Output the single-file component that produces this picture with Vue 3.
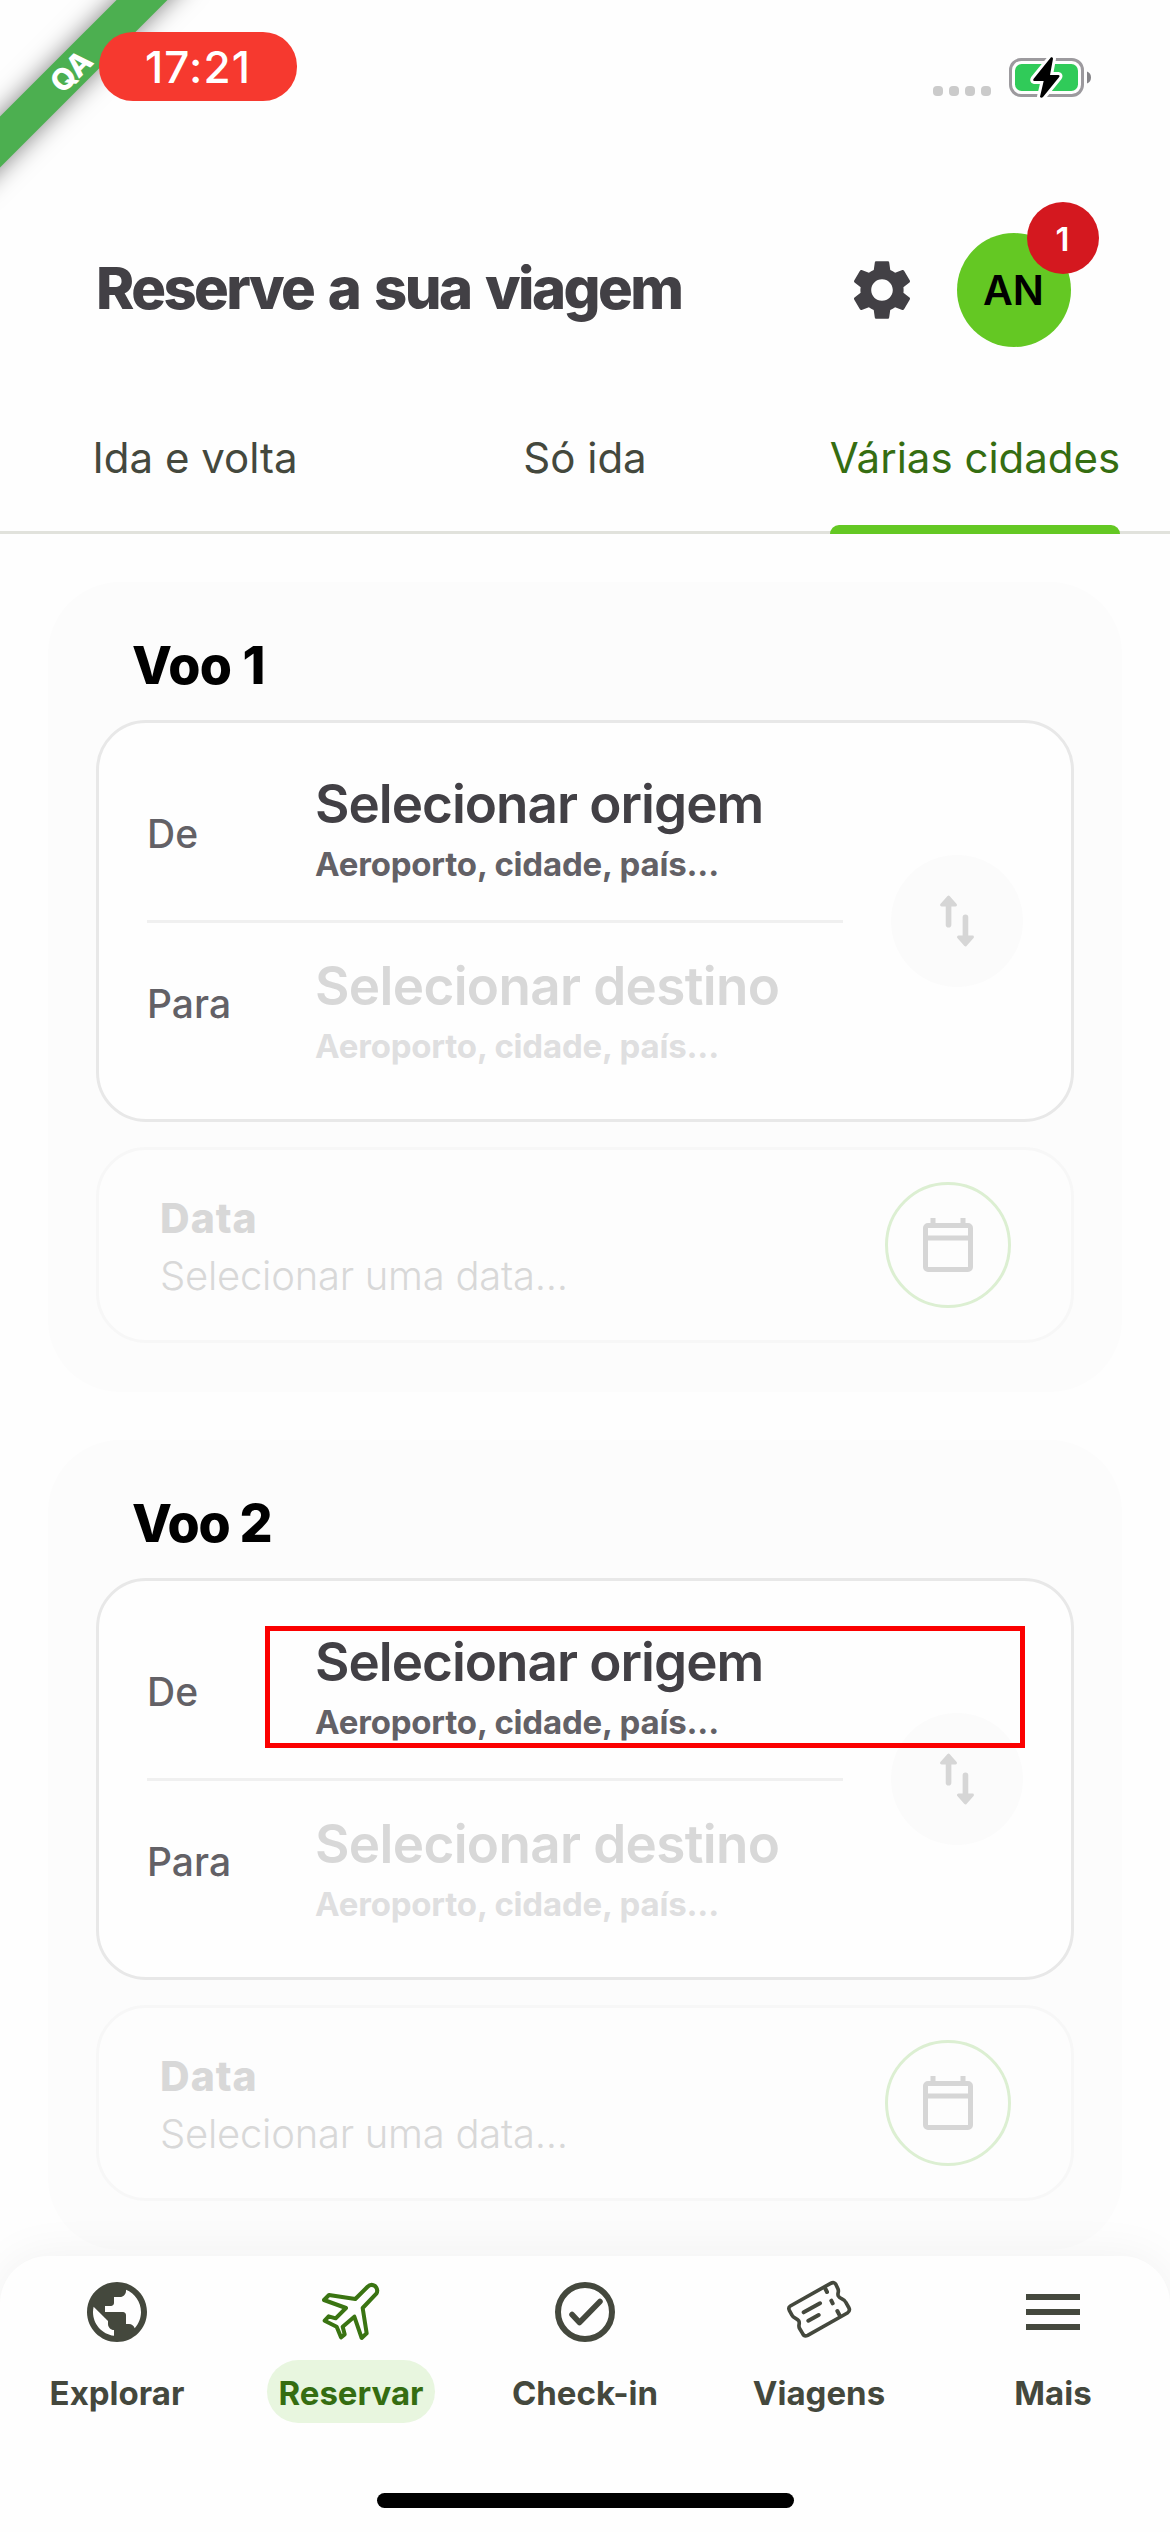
<script setup>
const tabs = [
  { label: 'Ida e volta', active: false },
  { label: 'Só ida', active: false },
  { label: 'Várias cidades', active: true }
]

const flights = [
  { id: 1, title: 'Voo 1', highlighted: false },
  { id: 2, title: 'Voo 2', highlighted: true }
]

const navItems = [
  { id: 'explore', label: 'Explorar' },
  { id: 'book', label: 'Reservar', active: true },
  { id: 'checkin', label: 'Check-in' },
  { id: 'trips', label: 'Viagens' },
  { id: 'more', label: 'Mais' }
]
</script>

<template>
  <div class="screen">
    <div class="ribbon">QA</div>

    <div class="status">
      <div class="clock">17:21</div>
      <div class="signal"><i v-for="n in 4" :key="n"></i></div>
      <svg class="battery" viewBox="459 156 270 150">
        <rect x="481.500" y="178.500" width="216" height="108" rx="32" fill="none" stroke="#9c9a9e" stroke-width="9" />
        <rect x="495" y="192" width="189" height="81" rx="20" fill="#30cb59" />
        <path d="M711 214.500q12 5 12 18t-12 18z" fill="#858488" />
        <path d="M603 172q6-2 6 4l-9 49h25q6 1 2 7l-48 59q-6 5-9-1l11-47h-28q-6-1-2-7z" fill="#000" stroke="#fff" stroke-width="18" stroke-linejoin="round" paint-order="stroke" />
      </svg>
    </div>

    <header class="header">
      <h1>Reserve a sua viagem</h1>
      <svg class="gear" viewBox="0 0 24 24" fill="#424045">
        <path d="M19.140 12.940c.04-.3.06-.61.06-.94 0-.32-.02-.64-.07-.94l2.030-1.580c.18-.14.23-.41.12-.61l-1.920-3.320c-.12-.22-.37-.29-.59-.22l-2.390.96c-.5-.38-1.030-.7-1.620-.94l-.36-2.540c-.04-.24-.24-.41-.48-.41h-3.840c-.24 0-.43.17-.47.41l-.36 2.540c-.59.24-1.130.57-1.620.94l-2.390-.96c-.22-.08-.47 0-.59.22L2.740 8.870c-.12.21-.08.47.12.61l2.030 1.580c-.05.3-.09.63-.09.94s.02.64.07.94l-2.030 1.580c-.18.14-.23.41-.12.61l1.920 3.320c.12.22.37.29.59.22l2.390-.96c.5.38 1.030.7 1.620.94l.36 2.540c.05.24.24.41.48.41h3.840c.24 0 .44-.17.47-.41l.36-2.540c.59-.24 1.130-.56 1.620-.94l2.390.96c.22.08.47 0 .59-.22l1.920-3.320c.12-.22.07-.47-.12-.61l-2.010-1.580zM12 15.600c-1.980 0-3.600-1.620-3.600-3.600s1.620-3.600 3.600-3.600 3.600 1.620 3.600 3.600-1.620 3.600-3.600 3.600z" />
      </svg>
      <div class="avatar">AN<span class="badge">1</span></div>
    </header>

    <nav class="tabs">
      <div v-for="tab in tabs" :key="tab.label" class="tab">
        <span :class="{ active: tab.active }">{{ tab.label }}</span>
      </div>
    </nav>

    <main class="list">
      <section v-for="flight in flights" :key="flight.id" class="flight">
        <h2 :class="{ wide: flight.id === 1 }">{{ flight.title }}</h2>

        <div class="route">
          <div class="places">
            <div class="place origin">
              <span class="label">De</span>
              <div class="choice">
                <strong>Selecionar origem</strong>
                <small>Aeroporto, cidade, país...</small>
              </div>
            </div>
            <div class="divider"></div>
            <div class="place destination">
              <span class="label">Para</span>
              <div class="choice">
                <strong>Selecionar destino</strong>
                <small>Aeroporto, cidade, país...</small>
              </div>
            </div>
          </div>
          <div class="swap">
            <svg viewBox="0 0 60 60" fill="#d6d6d6" stroke="#d6d6d6" stroke-linecap="round" stroke-linejoin="round">
              <path d="M21 12v22M39 26v22" fill="none" stroke-width="6" />
              <path d="M21 4.500L13.500 13h15zM39 55.500L31.500 47h15z" stroke-width="3" />
            </svg>
          </div>
          <div v-if="flight.highlighted" class="marker"></div>
        </div>

        <div class="date">
          <div class="date-text">
            <strong>Data</strong>
            <span>Selecionar uma data...</span>
          </div>
          <div class="calendar">
            <svg viewBox="0 0 60 60" fill="none" stroke="#d6d6d6" stroke-width="5">
              <rect x="7.500" y="10.500" width="45" height="44" rx="2.500" />
              <path d="M7.500 23h45M15 3v7M45 3v7" />
            </svg>
          </div>
        </div>
      </section>
    </main>

    <footer class="bottom">
      <div class="items">
        <div v-for="item in navItems" :key="item.id" class="item" :class="{ current: item.active }">
          <svg v-if="item.id === 'explore'" viewBox="-4.667 -3 33.333 30" fill="#44483d">
            <path d="M12 2C6.480 2 2 6.480 2 12s4.480 10 10 10 10-4.480 10-10S17.520 2 12 2zm-1 17.930c-3.950-.49-7-3.850-7-7.930 0-.62.08-1.210.21-1.790L9 15v1c0 1.100.9 2 2 2v1.930zm6.900-2.540c-.26-.81-1-1.390-1.900-1.390h-1v-3c0-.55-.45-1-1-1H8v-2h2c.55 0 1-.45 1-1V7h2c1.100 0 2-.9 2-2v-.41c2.930 1.190 5 4.060 5 7.410 0 2.080-.8 3.970-2.100 5.390z" />
          </svg>
          <svg v-else-if="item.id === 'book'" viewBox="903 141 300 270" fill="none" stroke="#3a7412" stroke-width="12" stroke-linejoin="round">
            <path d="M1066 237L1102 201Q1113 190 1125 198Q1136 209 1129 221L1088 264L1100 340L1085 354L1063 290L1028 320L1034 343L1023 352L1010 320L974 302L986 289L1007 295L1038 264L972 240L987 225Z" />
          </svg>
          <svg v-else-if="item.id === 'checkin'" viewBox="-50 -45 100 90" fill="none" stroke="#44483d">
            <circle r="27" stroke-width="6" />
            <path d="M-13 2.500L-5.500 10.500L15 -10.500" stroke-width="5.500" stroke-linecap="round" stroke-linejoin="round" />
          </svg>
          <svg v-else-if="item.id === 'trips'" viewBox="-3 -9 300 270" fill="none" stroke="#44483d" stroke-width="11" stroke-linecap="round" stroke-linejoin="round">
            <path d="M61 108L182 40Q193 34 198 44L204 57C208 68 201 69 205 78C210 88 224 86 228 98L237 114Q241 123 232 129L113 196Q103 201 98 191L88 174C84 164 91 161 86 152C81 144 70 145 65 134L58 121Q54 112 61 108Z" />
            <path d="M165 54L171 66M184 92L188 100M202 123L209 136M101 127L150 100M115 152L146 135" stroke-width="12" />
          </svg>
          <svg v-else viewBox="0 0 100 90" fill="#44483d">
            <path d="M23 27h54v6H23zM23 42h54v6H23zM23 57h54v6H23z" />
          </svg>
          <span>{{ item.label }}</span>
        </div>
      </div>
      <div class="home"></div>
    </footer>
  </div>
</template>

<style>
body {
  background: #fff;
}
</style>

<style scoped>
* {
  box-sizing: border-box;
}

.screen {
  position: relative;
  display: flex;
  flex-direction: column;
  width: 1170px;
  height: 2532px;
  overflow: hidden;
  background: #fefefe;
  font-family: Inter, "Liberation Sans", sans-serif;
  color: #424045;
}

.ribbon {
  position: absolute;
  left: -79px;
  top: 53px;
  width: 300px;
  height: 36px;
  background: #4caf50;
  box-shadow: 0 0 24px rgba(0, 0, 0, 0.5);
  transform: rotate(-45deg);
  color: #fff;
  font-size: 30px;
  font-weight: 800;
  line-height: 37px;
  text-align: center;
}

.status {
  position: relative;
  display: flex;
  align-items: flex-start;
  height: 141px;
  padding-right: 77px;
}

.clock {
  width: 198px;
  height: 69px;
  margin: 32px auto 0 99px;
  border-radius: 34px;
  background: #f6392f;
  color: #fff;
  font-size: 44px;
  font-weight: 500;
  letter-spacing: 1.100px;
  line-height: 70px;
  text-align: center;
}

.signal {
  display: flex;
  gap: 6px;
  margin: 86px 12px 0 0;
}

.signal i {
  width: 10px;
  height: 10px;
  border-radius: 4px;
  background: #cbcbcb;
}

.battery {
  width: 90px;
  height: 50px;
  margin-top: 52px;
}

.header {
  display: flex;
  align-items: center;
  height: 240px;
  padding: 57px 99.500px 0 96px;
}

h1 {
  flex: 1;
  margin: 0 0 4px;
  font-size: 58px;
  font-weight: 800;
  letter-spacing: -2.600px;
  word-spacing: 4.500px;
  line-height: 70px;
}

.gear {
  width: 72px;
  height: 72px;
  margin-right: 38.500px;
}

.avatar {
  position: relative;
  width: 114px;
  height: 114px;
  border-radius: 50%;
  background: #64c823;
  color: #000;
  font-size: 41px;
  font-weight: 600;
  line-height: 114px;
  text-align: center;
}

.badge {
  position: absolute;
  left: 70px;
  top: -31px;
  width: 72px;
  height: 72px;
  border-radius: 50%;
  background: #d4181f;
  color: #fff;
  font-size: 33px;
  line-height: 75px;
}

.tabs {
  display: flex;
  height: 153px;
  border-bottom: 3px solid #e1e2dc;
}

.tab {
  flex: 1;
  display: flex;
  justify-content: center;
  height: 153px;
  font-size: 42px;
  line-height: 153px;
  color: #44483d;
}

.tab span {
  display: block;
  height: 153px;
}

.tab .active {
  position: relative;
  color: #356d11;
}

.tab .active::after {
  content: '';
  position: absolute;
  left: 0;
  right: 0;
  bottom: 0;
  height: 9px;
  border-radius: 9px 9px 0 0;
  background: #64c823;
}

.list {
  display: flex;
  flex-direction: column;
  gap: 48px;
  padding: 48px;
}

.flight {
  flex: none;
  height: 810px;
  padding: 0 48px;
  border-radius: 72px;
  background: #fcfcfc;
}

h2 {
  height: 138px;
  margin: 0;
  padding: 29px 0 0 36px;
  color: #000;
  font-size: 52px;
  font-weight: 800;
  letter-spacing: -1.200px;
  line-height: 110px;
}

h2.wide {
  letter-spacing: -0.500px;
}

.route {
  position: relative;
  display: flex;
  align-items: center;
  height: 402px;
  padding: 0 48px;
  border: 3px solid #e8e8e8;
  border-radius: 50px;
  background: #fefefe;
}

.places {
  width: 696px;
  height: 396px;
  padding-top: 24px;
}

.place {
  display: flex;
  align-items: center;
}

.origin {
  height: 173px;
}

.destination {
  height: 186px;
}

.divider {
  height: 3px;
  background: #f0f0f0;
}

.label {
  width: 168px;
  font-size: 39px;
  font-weight: 500;
  line-height: 48px;
  color: #636166;
}

.destination .label {
  margin-bottom: 24px;
}

.choice {
  display: flex;
  flex-direction: column;
  white-space: nowrap;
}

.choice strong {
  font-size: 53px;
  font-weight: 600;
  letter-spacing: -1px;
  line-height: 61px;
  padding-top: 1px;
  margin-bottom: -1px;
}

.choice small {
  font-size: 33px;
  font-weight: 700;
  letter-spacing: -0.180px;
  line-height: 61px;
  color: #636166;
}

.destination strong {
  letter-spacing: -0.650px;
  color: #d8d8d8;
}

.destination small {
  color: #dfdfe0;
}

.swap {
  display: flex;
  align-items: center;
  justify-content: center;
  width: 132px;
  height: 132px;
  margin-left: 48px;
  border-radius: 50%;
  background: #fbfbfb;
}

.swap svg {
  width: 60px;
  height: 60px;
  transform: scale(0.94);
}

.marker {
  position: absolute;
  left: 166px;
  top: 45px;
  width: 760px;
  height: 122px;
  border: 5px solid #fb0000;
}

.date {
  display: flex;
  align-items: center;
  justify-content: space-between;
  height: 196px;
  margin-top: 25px;
  padding: 0 60px 0 61px;
  border: 3px solid #f7f7f7;
  border-radius: 50px;
  background: #fdfdfd;
}

.date-text {
  display: flex;
  flex-direction: column;
  padding-top: 4px;
  line-height: 57px;
  color: #d8d8d8;
}

.date-text strong {
  font-size: 41px;
  font-weight: 800;
  letter-spacing: 1px;
}

.date-text span {
  font-size: 40px;
  font-weight: 300;
  letter-spacing: -0.250px;
}

.calendar {
  display: flex;
  align-items: center;
  justify-content: center;
  width: 126px;
  height: 126px;
  border: 3px solid #dcefd2;
  border-radius: 50%;
}

.calendar svg {
  width: 60px;
  height: 60px;
}

.bottom {
  position: absolute;
  left: 0;
  right: 0;
  bottom: 0;
  display: flex;
  flex-direction: column;
  align-items: center;
  justify-content: space-between;
  height: 276px;
  padding: 11px 0 24px;
  border-radius: 48px 48px 0 0;
  background: #fefefe;
  box-shadow: 0 0 48px rgba(0, 0, 0, 0.06);
}

.items {
  display: flex;
  width: 100%;
}

.item {
  flex: 1;
  display: flex;
  flex-direction: column;
  align-items: center;
}

.item svg {
  width: 100px;
  height: 90px;
}

.item span {
  height: 63px;
  margin-top: 3px;
  padding: 0 11px;
  border-radius: 32px;
  color: #44483d;
  font-size: 33px;
  font-weight: 700;
  line-height: 66px;
}

.current span {
  background: #e8f6df;
  color: #356d11;
}

.home {
  width: 417px;
  height: 15px;
  border-radius: 8px;
  background: #000;
}
</style>
